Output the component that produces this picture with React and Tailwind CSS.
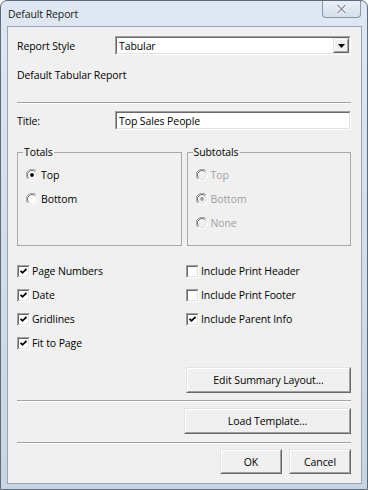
import React from 'react';

// classic win32 edges
function Sunken({ className = '', children }) {
  return (
    <div className={`border border-t-[#a0a0a0] border-l-[#a0a0a0] border-b-white border-r-white ${className}`}>
      <div className="h-full border border-t-[#696969] border-l-[#696969] border-b-[#e3e3e3] border-r-[#e3e3e3] bg-white flex items-center">
        {children}
      </div>
    </div>
  );
}

function Button({ className = '', children }) {
  return (
    <div className={`border border-t-[#e3e3e3] border-l-[#e3e3e3] border-b-[#696969] border-r-[#696969] ${className}`}>
      <div className="h-full border border-t-white border-l-white border-b-[#a0a0a0] border-r-[#a0a0a0] bg-[#f0f0f0] flex items-center justify-center">
        {children}
      </div>
    </div>
  );
}

function Check({ checked, label, className = '' }) {
  return (
    <div className={`flex items-center h-[24px] ${className}`}>
      <div className="w-[13px] h-[13px] border border-t-[#a0a0a0] border-l-[#a0a0a0] border-b-white border-r-white">
        <div className="w-full h-full border border-t-[#696969] border-l-[#696969] border-b-[#e3e3e3] border-r-[#e3e3e3] bg-white">
          {checked && (
            <svg width="9" height="9" viewBox="0 0 9 9" className="block">
              <polyline points="1.5,3.8 3.5,5.8 7.5,1.8" fill="none" stroke="#000" strokeWidth="1.8" />
            </svg>
          )}
        </div>
      </div>
      <span className="ml-[2px]">{label}</span>
    </div>
  );
}

function Radio({ checked, label, disabled }) {
  return (
    <div className={`flex items-center h-[24px] ${disabled ? 'text-[#a0a0a0]' : ''}`}>
      <svg width="12" height="12" viewBox="0 0 12 12" className="shrink-0">
        <circle cx="6" cy="6" r="5" fill={disabled ? '#f0f0f0' : '#fff'} />
        <path d="M1.76 10.24 A6 6 0 0 1 10.24 1.76" fill="none" stroke="#a0a0a0" />
        <path d="M10.24 1.76 A6 6 0 0 1 1.76 10.24" fill="none" stroke="#fff" />
        <path d="M2.82 9.18 A4.5 4.5 0 0 1 9.18 2.82" fill="none" stroke="#696969" />
        <path d="M9.18 2.82 A4.5 4.5 0 0 1 2.82 9.18" fill="none" stroke="#e3e3e3" />
        {checked && <circle cx="6" cy="6" r="1.9" fill={disabled ? '#a0a0a0' : '#000'} />}
      </svg>
      <span className="ml-[3px]">{label}</span>
    </div>
  );
}

function Sep() {
  return <div className="h-[2px] border-t border-t-[#a0a0a0] border-b border-b-white" />;
}

export default function App() {
  return (
    <div className="w-[368px] h-[490px] rounded-t-[7px] border border-[#5d6a78] bg-linear-to-b from-[#dfe8f2] to-[#c7d4e2] font-['Open_Sans',sans-serif] text-[10.5px] tracking-[-0.1px] leading-[16px] text-black overflow-hidden">
      {/* title bar */}
      <div className="flex h-[25px]">
        <div className="pl-[7px] pt-[5px] text-[#1a1a1a]">Default Report</div>
        <div className="ml-auto mr-[6px] w-[39px] h-[17px] rounded-b-[4px] border border-t-0 border-[#8a97a5] bg-linear-to-b from-[#e9eff6] to-[#d5dfea] flex items-center justify-center">
          <svg width="11" height="10" viewBox="0 0 11 10">
            <path d="M1.5 1 L9.5 9 M9.5 1 L1.5 9" stroke="#fff" strokeWidth="3.2" />
            <path d="M1.5 1 L9.5 9 M9.5 1 L1.5 9" stroke="#8a939e" strokeWidth="1.5" />
          </svg>
        </div>
      </div>

      {/* client */}
      <div className="ml-[6px] w-[355px] h-[458px] border border-[#97a5b4] bg-[#f0f0f0] pl-[9px] pr-[10px] flex flex-col">
        <div className="mt-[9px] flex items-center h-[19px]">
          <span className="w-[98px] shrink-0">Report Style</span>
          <Sunken className="flex-1 h-[19px]">
            <span className="pl-[2px] flex-1">Tabular</span>
            <Button className="w-[16px] h-[15px] mr-0">
              <svg width="7" height="4" viewBox="0 0 7 4">
                <polygon points="0,0 7,0 3.5,4" fill="#000" />
              </svg>
            </Button>
          </Sunken>
        </div>

        <div className="mt-[12px] h-[16px]">Default Tabular Report</div>

        <div className="mt-[19px]"><Sep /></div>

        <div className="mt-[7px] flex items-center h-[19px]">
          <span className="w-[98px] shrink-0">Title:</span>
          <Sunken className="flex-1 h-[19px]">
            <span className="pl-[2px]">Top Sales People</span>
          </Sunken>
        </div>

        <div className="mt-[14px] flex gap-[5px]">
          <fieldset className="w-[165px] h-[102px] border border-[#a9a9a9] pl-[8px]">
            <legend className="ml-[-3px] px-[1px]">Totals</legend>
            <div className="mt-[3px]">
              <Radio checked label="Top" />
              <Radio label="Bottom" />
            </div>
          </fieldset>
          <fieldset className="w-[165px] h-[102px] border border-[#a9a9a9] pl-[8px]">
            <legend className="ml-[-3px] px-[1px]">Subtotals</legend>
            <div className="mt-[3px]">
              <Radio disabled label="Top" />
              <Radio disabled checked label="Bottom" />
              <Radio disabled label="None" />
            </div>
          </fieldset>
        </div>

        <div className="mt-[13px] grid grid-cols-[169px_1fr]">
          <div>
            <Check checked label="Page Numbers" />
            <Check checked label="Date" />
            <Check checked label="Gridlines" />
            <Check checked label="Fit to Page" />
          </div>
          <div>
            <Check label="Include Print Header" />
            <Check label="Include Print Footer" />
            <Check checked label="Include Parent Info" />
          </div>
        </div>

        <Button className="mt-[12px] self-end w-[165px] h-[26px]">Edit Summary Layout...</Button>
        <div className="mt-[7px]"><Sep /></div>
        <Button className="mt-[6px] self-end w-[167px] h-[26px]">Load Template...</Button>
        <div className="mt-[8px]"><Sep /></div>
        <div className="mt-[5px] flex justify-end gap-[7px]">
          <Button className="w-[62px] h-[25px]">OK</Button>
          <Button className="w-[62px] h-[25px]">Cancel</Button>
        </div>
      </div>
    </div>
  );
}
